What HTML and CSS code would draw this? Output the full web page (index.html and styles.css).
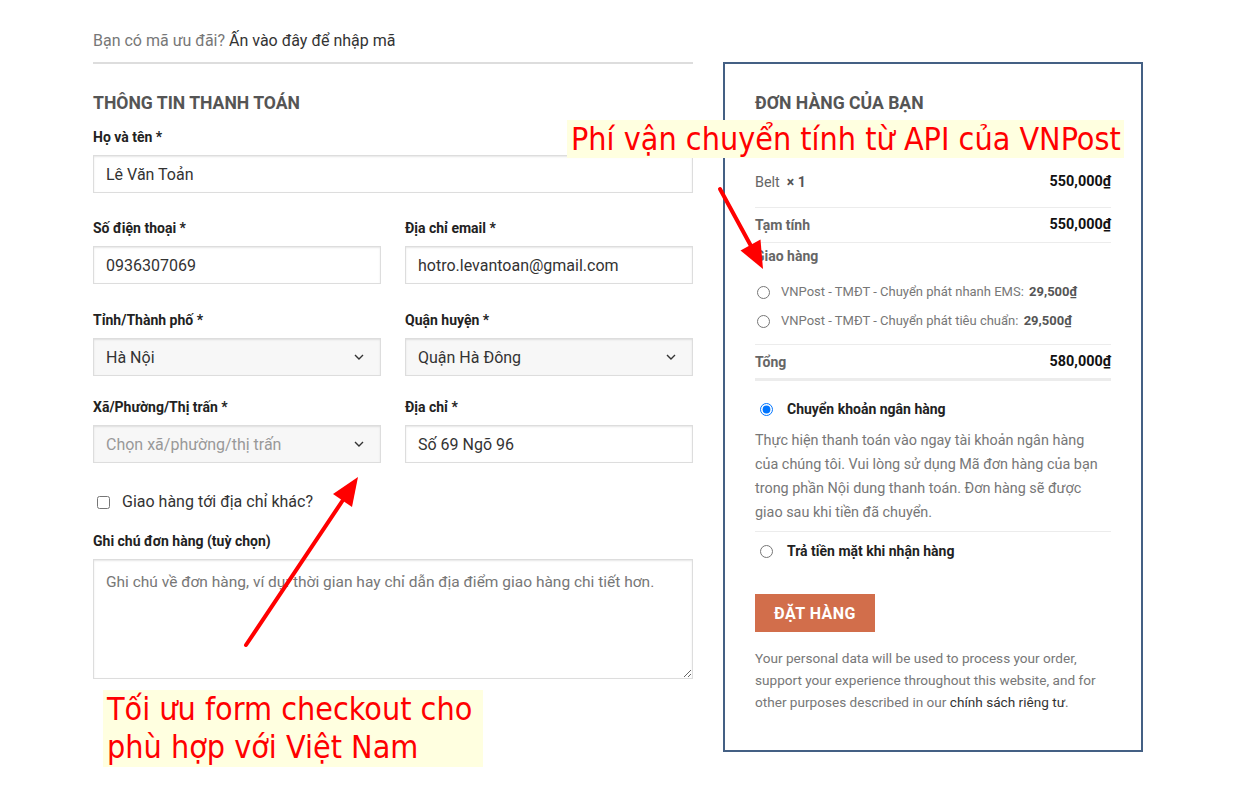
FILE: index.html
```html
<!DOCTYPE html>
<html lang="vi">
<head>
<meta charset="utf-8">
<title>Thanh toán</title>
<link rel="stylesheet" href="styles.css">
</head>
<body>
<div class="page">
  <div class="checkout">
    <div class="billing">
      <div class="coupon"><span class="muted">Bạn có mã ưu đãi?</span> <a class="coupon-link">Ấn vào đây để nhập mã</a></div>
      <h3 class="sec-title">THÔNG TIN THANH TOÁN</h3>

      <div class="field row-1">
        <label class="lbl">Họ và tên <span class="req">*</span></label>
        <input class="inp" type="text" value="Lê Văn Toản">
      </div>

      <div class="grid2 row-2">
        <div class="field">
          <label class="lbl">Số điện thoại <span class="req">*</span></label>
          <input class="inp" type="text" value="0936307069">
        </div>
        <div class="field">
          <label class="lbl">Địa chỉ email <span class="req">*</span></label>
          <input class="inp" type="text" value="hotro.levantoan@gmail.com">
        </div>
      </div>

      <div class="grid2 row-3">
        <div class="field">
          <label class="lbl">Tỉnh/Thành phố <span class="req">*</span></label>
          <div class="sel"><span>Hà Nội</span><svg class="chev" width="10" height="6" viewBox="0 0 10 6"><path d="M1 1l4 4 4-4" fill="none" stroke="#333" stroke-width="1.4"/></svg></div>
        </div>
        <div class="field">
          <label class="lbl">Quận huyện <span class="req">*</span></label>
          <div class="sel"><span>Quận Hà Đông</span><svg class="chev" width="10" height="6" viewBox="0 0 10 6"><path d="M1 1l4 4 4-4" fill="none" stroke="#333" stroke-width="1.4"/></svg></div>
        </div>
      </div>

      <div class="grid2 row-4">
        <div class="field">
          <label class="lbl">Xã/Phường/Thị trấn <span class="req">*</span></label>
          <div class="sel"><span class="ph">Chọn xã/phường/thị trấn</span><svg class="chev" width="10" height="6" viewBox="0 0 10 6"><path d="M1 1l4 4 4-4" fill="none" stroke="#333" stroke-width="1.4"/></svg></div>
        </div>
        <div class="field">
          <label class="lbl">Địa chỉ <span class="req">*</span></label>
          <input class="inp" type="text" value="Số 69 Ngõ 96">
        </div>
      </div>

      <label class="ship-diff"><input type="checkbox" class="cb"><span>Giao hàng tới địa chỉ khác?</span></label>

      <div class="field notes">
        <label class="lbl">Ghi chú đơn hàng (tuỳ chọn)</label>
        <textarea class="ta" placeholder="Ghi chú về đơn hàng, ví dụ: thời gian hay chỉ dẫn địa điểm giao hàng chi tiết hơn."></textarea>
      </div>
    </div>

    <aside class="order">
      <h3 class="sec-title order-title">ĐƠN HÀNG CỦA BẠN</h3>
      <div class="t-head"><span>Sản phẩm</span><span>Tạm tính</span></div>
      <div class="t-row item"><span><span class="pname">Belt</span>&nbsp; <strong class="qty">× 1</strong></span><span class="amt">550,000₫</span></div>
      <div class="t-row sub"><span class="tl">Tạm tính</span><span class="amt">550,000₫</span></div>
      <div class="ship">
        <div class="tl">Giao hàng</div>
        <ul class="ship-list">
          <li><input type="radio" name="ship" class="rd"><span>VNPost - TMĐT - Chuyển phát nhanh EMS: <strong class="sp">29,500₫</strong></span></li>
          <li><input type="radio" name="ship" class="rd"><span>VNPost - TMĐT - Chuyển phát tiêu chuẩn: <strong class="sp">29,500₫</strong></span></li>
        </ul>
      </div>
      <div class="t-row total"><span class="tl">Tổng</span><span class="amt">580,000₫</span></div>

      <div class="pay">
        <label class="pay-opt"><input type="radio" name="pay" class="rd2" checked><span>Chuyển khoản ngân hàng</span></label>
        <p class="pay-desc">Thực hiện thanh toán vào ngay tài khoản ngân hàng<br>của chúng tôi. Vui lòng sử dụng Mã đơn hàng của bạn<br>trong phần Nội dung thanh toán. Đơn hàng sẽ được<br>giao sau khi tiền đã chuyển.</p>
        <label class="pay-opt pay-2"><input type="radio" name="pay" class="rd2"><span>Trả tiền mặt khi nhận hàng</span></label>
      </div>

      <button class="btn" type="button">ĐẶT HÀNG</button>
      <p class="privacy">Your personal data will be used to process your order, support your experience throughout this website, and for other purposes described in our <a class="plink">chính sách riêng tư</a>.</p>
    </aside>
  </div>

  <div class="note note-ship">Phí vận chuyển tính từ API của VNPost</div>
  <div class="note note-form">Tối ưu form checkout cho<br>phù hợp với Việt Nam</div>

  <svg class="arrows" width="1255" height="786" viewBox="0 0 1255 786">
    <line x1="720" y1="189" x2="751" y2="246" stroke="#ff0000" stroke-width="4" stroke-linecap="round"/>
    <polygon points="763,269 740.5,250.5 760.5,239.5" fill="#ff0000"/>
    <line x1="246" y1="645" x2="343" y2="500" stroke="#ff0000" stroke-width="4" stroke-linecap="round"/>
    <polygon points="358,477 352,507 333,494" fill="#ff0000"/>
  </svg>
</div>
</body>
</html>
```

FILE: styles.css
```css
* { box-sizing: border-box; }
html, body { margin: 0; padding: 0; background: #fff; }
body { font-family: Roboto, "Liberation Sans", Arial, sans-serif; color: #333; }

.page { position: relative; width: 1255px; height: 786px; overflow: hidden; }

.checkout { display: flex; align-items: flex-start; gap: 30px; padding: 29px 0 0 93px; }

.billing { width: 600px; flex: none; }

.coupon { font-size: 16px; line-height: 24px; padding-bottom: 9px; border-bottom: 2px solid #ddd; }
.muted { color: #777; }
.coupon-link { color: #333; }

.sec-title { margin: 27px 0 12px; font-size: 17.6px; line-height: 24px; font-weight: 700; color: #555; letter-spacing: 0; }

.lbl { display: block; font-size: 14px; line-height: 20px; font-weight: 700; color: #222; margin-bottom: 8px; }
.req { color: #222; }

.inp, .sel, .ta {
  display: block; width: 100%; height: 38px; border: 1px solid #ddd;
  box-shadow: inset 0 1px 2px rgba(0,0,0,.1); font-family: Roboto, "Liberation Sans", Arial, sans-serif;
  font-size: 16px; color: #333; padding: 0 12px; background: #fff; border-radius: 0; outline: none;
}
.sel { display: flex; align-items: center; justify-content: space-between; background: #f7f7f7; padding: 0 12px 0 12px; }
.sel .ph { color: #999; }
.chev { flex: none; margin-right: 4px; }

.grid2 { display: grid; grid-template-columns: 288px 288px; column-gap: 24px; }

.row-1 { margin-bottom: 25px; }
.row-2 { margin-bottom: 26px; }
.row-3 { margin-bottom: 21px; }
.row-4 { margin-bottom: 27px; }

.ship-diff { display: flex; align-items: center; font-size: 16px; line-height: 24px; color: #333; }
.cb { width: 13px; height: 13px; margin: 0 12px 0 4px; }

.notes { margin-top: 17px; }
.ta { height: 120px; padding: 10px 12px; resize: vertical; line-height: 24px; font-size: 15.5px; }
.ta::placeholder { color: #777; }

/* order box */
.order { width: 420px; flex: none; margin-top: 33px; border: 2px solid #446084; padding: 26px 30px 37px; }
.order-title { margin: 1px 0 14px; }

.t-head { display: flex; justify-content: space-between; font-size: 14px; line-height: 20px; font-weight: 700; color: #777; text-transform: uppercase; padding-bottom: 5px; border-bottom: 3px solid #ececec; }

.t-row { display: flex; justify-content: space-between; font-size: 14px; line-height: 20px; border-bottom: 1px solid #ececec; }
.item { padding: 15px 0 14px; }
.pname { color: #666; font-size: 14.4px; }
.qty { color: #555; }
.amt { font-weight: 700; color: #111; font-size: 14.4px; }
.tl { font-weight: 700; color: #666; font-size: 14px; line-height: 20px; }
.sub { padding: 7px 0; }

.ship { padding: 3px 0 13px; border-bottom: 1px solid #ececec; }
.ship-list { list-style: none; margin: 16px 0 0; padding: 0; }
.ship-list li { display: flex; align-items: center; font-size: 13px; line-height: 20px; color: #777; }
.ship-list li + li { margin-top: 9px; }
.rd { width: 13px; height: 13px; margin: 0 11px 0 2px; flex: none; }
.sp { color: #555; margin-left: 2px; }

.total { padding: 7px 0 6px; border-bottom: 3px solid #ececec; }

.pay { margin-top: 16px; }
.pay-opt { display: flex; align-items: center; font-size: 14px; line-height: 24px; font-weight: 700; color: #222; }
.rd2 { width: 13px; height: 13px; margin: 0 14px 0 5px; flex: none; }
.pay-desc { margin: 8px 0 0; font-size: 14.4px; line-height: 24px; color: #777; padding-bottom: 6px; border-bottom: 1px solid #ececec; white-space: nowrap; }
.pay-2 { margin-top: 7px; }

.btn { display: inline-flex; align-items: center; justify-content: center; margin-top: 31px; height: 38px; padding: 0 19px; border: 0; background: #d26e4b; color: #fff; font-family: Roboto, "Liberation Sans", Arial, sans-serif; font-size: 16px; font-weight: 700; letter-spacing: .03em; }

.privacy { margin: 15px 0 0; font-size: 13.6px; line-height: 22px; color: #777; }
.plink { color: #333; }

/* annotations overlay */
.note { position: absolute; background: #ffffe0; color: #ff0000; font-family: "DejaVu Sans Condensed", "DejaVu Sans", sans-serif; font-stretch: condensed; font-size: 32px; white-space: nowrap; }
.note-ship { left: 567px; top: 120px; width: 557px; height: 38px; line-height: 38px; padding-left: 4px; }
.note-form { left: 103px; top: 690px; width: 380px; height: 77px; line-height: 38px; padding-left: 4px; }

.arrows { position: absolute; left: 0; top: 0; pointer-events: none; }
```
